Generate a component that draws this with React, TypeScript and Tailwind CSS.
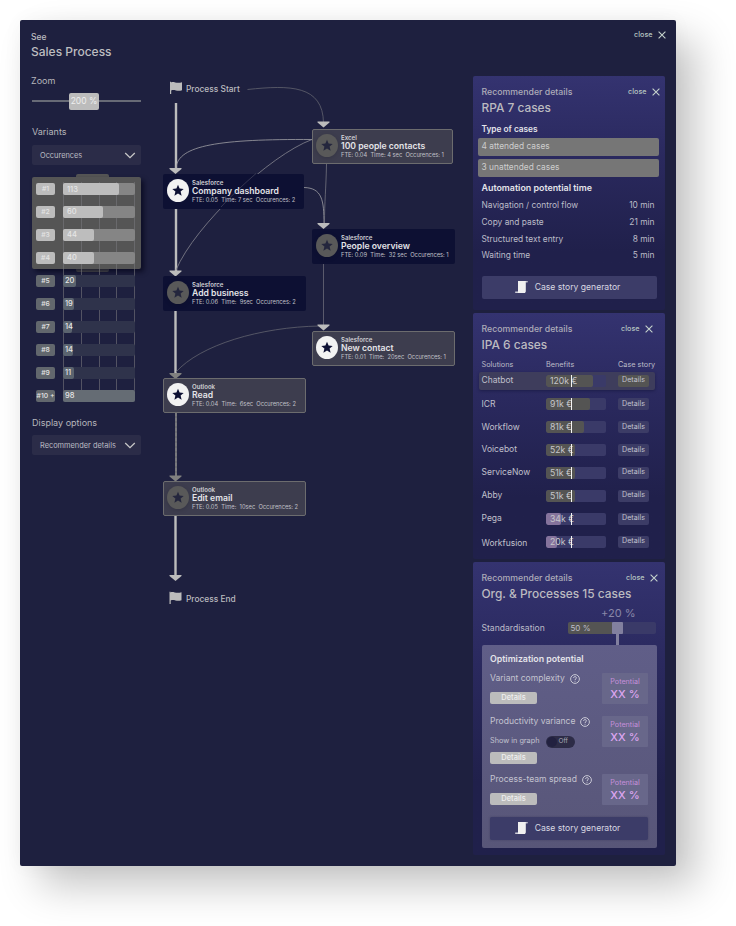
import React from "react";
import { clsx } from "clsx";

type Variant = { label: string; value: number; width: number; tone: "light" | "dark" | "full" };

const variants: Variant[] = [
  { label: "#1", value: 113, width: 56, tone: "light" },
  { label: "#2", value: 60, width: 40, tone: "light" },
  { label: "#3", value: 44, width: 31, tone: "light" },
  { label: "#4", value: 40, width: 31, tone: "light" },
  { label: "#5", value: 20, width: 12.5, tone: "dark" },
  { label: "#6", value: 19, width: 11, tone: "dark" },
  { label: "#7", value: 14, width: 9, tone: "dark" },
  { label: "#8", value: 14, width: 10, tone: "dark" },
  { label: "#9", value: 11, width: 11, tone: "dark" },
  { label: "#10 +", value: 98, width: 72, tone: "full" },
];

type ProcessNode = {
  x: number;
  y: number;
  w: number;
  app: string;
  title: string;
  meta: string;
  outlined?: boolean;
  active?: boolean;
};

const nodes: ProcessNode[] = [
  { x: 163, y: 174, w: 141, app: "Salesforce", title: "Company dashboard", meta: "FTE: 0.05  Time: 7 sec  Occurences: 2", active: true },
  { x: 163, y: 276, w: 143, app: "Salesforce", title: "Add business", meta: "FTE: 0.06  Time:  9sec  Occurences: 2" },
  { x: 163, y: 378, w: 143, app: "Outlook", title: "Read", meta: "FTE: 0.04  Time:  6sec  Occurences: 2", outlined: true, active: true },
  { x: 163, y: 481, w: 143, app: "Outlook", title: "Edit email", meta: "FTE: 0.05  Time:  10sec  Occurences: 2", outlined: true },
  { x: 312, y: 129, w: 141, app: "Excel", title: "100 people contacts", meta: "FTE: 0.04  Time: 4 sec  Occurences: 1", outlined: true },
  { x: 312, y: 229, w: 143, app: "Salesforce", title: "People overview", meta: "FTE: 0.09  Time:  32 sec  Occurences: 1" },
  { x: 312, y: 331, w: 143, app: "Salesforce", title: "New contact", meta: "FTE: 0.01  Time:  20sec  Occurences: 1", outlined: true, active: true },
];

const times = [
  ["Navigation / control flow", "10 min"],
  ["Copy and paste", "21 min"],
  ["Structured text entry", "8 min"],
  ["Waiting time", "5 min"],
];

const solutions = [
  { name: "Chatbot", benefit: "120k €", width: 47 },
  { name: "ICR", benefit: "91k €", width: 44 },
  { name: "Workflow", benefit: "81k €", width: 38 },
  { name: "Voicebot", benefit: "52k €", width: 29 },
  { name: "ServiceNow", benefit: "51k €", width: 29 },
  { name: "Abby", benefit: "51k €", width: 29 },
  { name: "Pega", benefit: "34k €", width: 15, pink: true },
  { name: "Workfusion", benefit: "20k €", width: 11, pink: true },
];

// The canvas shares its coordinate system with the whole page.
const ORIGIN_X = 155;
const ORIGIN_Y = 70;

function Cross() {
  return (
    <svg width="8" height="8" viewBox="0 0 8 8" stroke="#c5d2cc" strokeWidth="1.1">
      <path d="M.6 .6 7.4 7.4M7.4 .6 .6 7.4" />
    </svg>
  );
}

function Close({ className }: { className?: string }) {
  return (
    <div className={clsx("flex items-center gap-[5px] text-[7.2px] leading-[10px] font-medium text-[#b5c4c0]", className)}>
      close
      <Cross />
    </div>
  );
}

function Select({ children }: { children: string }) {
  return (
    <div className="flex h-5 items-center justify-between rounded-[2px] bg-[#2b2c48] pt-px pr-[5px] pl-2 text-[7.4px] text-[#bcbcc4]">
      {children}
      <svg width="12" height="7" viewBox="0 0 12 7" fill="none" stroke="#c8c8c8" strokeWidth="1.3">
        <path d="M1.2 1 6 5.6 10.8 1" />
      </svg>
    </div>
  );
}

function VariantRow({ v }: { v: Variant }) {
  const light = v.tone === "light";
  return (
    <div className="flex h-[22.95px] items-center pl-1">
      <div
        className={clsx(
          "flex h-3 w-[19px] items-center justify-center rounded-[2px] text-[6.8px] font-medium whitespace-nowrap text-[#e4e4e4]",
          light ? "bg-[#bcbcbc]" : "bg-[#62676d]",
        )}
      >
        {v.label}
      </div>
      <div className={clsx("ml-2 h-3 w-[72px] rounded-[2px]", light ? "bg-[#858585]" : "bg-[#2f334b]")}>
        <div
          className={clsx(
            "flex h-full items-center rounded-[2px] text-[7.5px] font-medium text-[#e6e6e6]",
            v.tone === "light" && "bg-[#bdbdbd] pl-[4px]",
            v.tone === "dark" && "bg-[#5b646f] pl-[2px]",
            v.tone === "full" && "bg-[#656c74] pl-[2px]",
          )}
          style={{ width: v.width }}
        >
          {v.value}
        </div>
      </div>
    </div>
  );
}

function Sidebar() {
  return (
    <aside className="w-[110px] pl-[1px] text-[#b6b6bb]">
      <div className="-ml-px text-[9px] leading-[10px]">Zoom</div>
      <div className="mt-[6px] flex h-[18px] items-center">
        <div className="h-[2px] w-[37px] bg-[#676a76]" />
        <div className="flex h-[17px] w-[30px] items-center justify-center rounded-[2px] bg-[#bcbcbc] text-[8.5px] text-[#eeeeee]">
          200 %
        </div>
        <div className="h-[2px] grow bg-[#676a76]" />
      </div>
      <div className="mt-[17px] mb-2 text-[9px] leading-[10px]">Variants</div>
      <Select>Occurences</Select>

      <div className="relative mt-3 pt-[0.7px]">
        <div className="absolute top-[-3px] left-[44px] h-[98px] w-[33px] rounded-[2px] bg-[#555555]" />
        <div className="absolute top-0 left-0 h-[92px] w-[109px] rounded-[2px] bg-[#555555] shadow-[3px_3px_5px_rgba(5,6,25,0.7)]" />
        <div className="absolute top-[5px] left-[31px] flex h-[219px] w-[72px] justify-between">
          {[0, 1, 2, 3, 4].map((i) => (
            <div key={i} className="w-px bg-[#77777c]/60" />
          ))}
        </div>
        <div className="relative">
          {variants.map((v) => (
            <VariantRow key={v.label} v={v} />
          ))}
        </div>
      </div>

      <div className="mt-[11.4px] mb-[7px] text-[9px] leading-[10px] whitespace-nowrap">Display options</div>
      <Select>Recommender details</Select>
    </aside>
  );
}

function Star({ active }: { active?: boolean }) {
  return (
    <svg width="22" height="23" viewBox="0 0 22 23" className={clsx("shrink-0", !active && "drop-shadow-sm")}>
      <ellipse cx="11" cy="11.5" rx="11" ry="11.5" fill={active ? "#f2f2f2" : "#595959"} />
      <path
        d="M11 5.8 12.6 9.6 16.7 9.9 13.6 12.6 14.6 16.7 11 14.5 7.4 16.7 8.4 12.6 5.3 9.9 9.4 9.6Z"
        fill={active ? "#0d1033" : "#24263d"}
      />
    </svg>
  );
}

function NodeCard({ n }: { n: ProcessNode }) {
  return (
    <div
      className={clsx(
        "absolute flex h-[35px] gap-[3px] rounded-[2px] whitespace-nowrap",
        n.outlined ? "border-[1.5px] border-[#6c6c6e] bg-[#3d3d4e] pt-[4px] pl-[3px]" : "bg-[#0d1033] pt-[5px] pl-[4px]",
      )}
      style={{ left: n.x - ORIGIN_X, top: n.y - ORIGIN_Y, width: n.w }}
    >
      <Star active={n.active} />
      <div>
        <div className="text-[6.1px] leading-[7px] font-semibold text-[#d2d2d6]">{n.app}</div>
        <div className="text-[8.65px] leading-[10px] font-semibold text-[#e4e4e8]">{n.title}</div>
        <div className="text-[5.75px] leading-[8px] whitespace-pre text-[#c0c0c8]">{n.meta}</div>
      </div>
    </div>
  );
}

function Flag({ x, y }: { x: number; y: number }) {
  return (
    <path
      transform={`translate(${x} ${y})`}
      d="M0 .2H1V1C3.5-.6 6 2.4 12 .8V8.8C7 10.4 4.5 7.4 1.2 9V12.6H0Z"
      fill="#bcbcbc"
    />
  );
}

function Head({ x, y, dim }: { x: number; y: number; dim?: boolean }) {
  return <path d={`M${x - 6} ${y}H${x + 6}V${y + 1}L${x} ${y + 6}L${x - 6} ${y + 1}Z`} fill={dim ? "#80807f" : "#bcbcbc"} />;
}

function ProcessGraph() {
  return (
    <main className="relative h-[546px] w-[310px]">
      <svg className="absolute inset-0" width="310" height="546" viewBox="155 70 310 546" fill="none">
        <Flag x={170} y={81.5} />
        <Flag x={169.5} y={591.5} />
        <g stroke="#bcbcbc" strokeWidth="2.4">
          <path d="M176 103V169M176 208V272M175.5 310V374M175.5 516V576" />
        </g>
        <path d="M176 413V476" stroke="#6e6e73" strokeWidth="2" />
        <path d="M176 413V476" stroke="#7e7e82" strokeWidth="1.4" strokeDasharray="3 2" />
        <g stroke="#85858f" strokeWidth=".8">
          <path d="M312 139.5C220 139 178 145 176 168" stroke="#a0a0a4" />
          <path d="M312 139.5C270 155 195 225 176 270" />
          <path d="M304 187.5C322 188 324 200 324 224" stroke="#a0a0a4" />
          <path d="M326.5 164C326 190 324.5 200 324.5 224" stroke="#74747f" />
          <path d="M247.5 89.5C290 85 323 85 323.5 123" stroke="#62636f" />
          <path d="M323.5 264V325" stroke="#5a5a6c" strokeWidth="1" />
          <path d="M320 326C260 327 200 345 176 372" stroke="#62636f" />
        </g>
        <Head x={175.5} y={168} />
        <Head x={175.5} y={270.5} />
        <Head x={175.5} y={373} dim />
        <Head x={175.5} y={475.5} dim />
        <Head x={175.5} y={575} />
        <Head x={323.5} y={121.5} />
        <Head x={323.5} y={223} />
        <Head x={323.5} y={324.5} />
      </svg>
      <div className="absolute top-[13px] left-[31px] text-[8.4px] leading-3 font-medium text-[#bcbcbf]">Process Start</div>
      <div className="absolute top-[523px] left-[31px] text-[8.4px] leading-3 font-medium text-[#bcbcbf]">Process End</div>
      {nodes.map((n) => (
        <NodeCard key={n.title} n={n} />
      ))}
      <svg className="absolute inset-0 opacity-40" width="310" height="546" viewBox="155 70 310 546" fill="none">
        <path d="M256 173.5C244 184 232 195 221 207" stroke="#85858f" strokeWidth=".8" />
      </svg>
    </main>
  );
}

type PanelProps = { title: string; closeClass: string; className: string; children: React.ReactNode };

function Panel({ title, closeClass, className, children }: PanelProps) {
  return (
    <section className={clsx("rounded-[2px] bg-linear-to-b from-[#343370] via-[#2a295e] via-35% to-[#20204b] to-75% pr-[8.5px] pl-[8.5px]", className)}>
      <div className="flex items-start justify-between pt-[11px]">
        <div className="text-[8.75px] leading-[11px] font-medium text-[#aeadb9]">Recommender details</div>
        <Close className={closeClass} />
      </div>
      <h2 className="mt-[2px] text-[11.9px] leading-[15px] font-medium text-[#bcbbc0]">{title}</h2>
      {children}
    </section>
  );
}

function StoryButton({ className }: { className?: string }) {
  return (
    <div className={clsx("flex items-center justify-center rounded-[2px] bg-[#3c3c68] text-[8.6px] text-[#d8d8e2]", className)}>
      <svg width="13" height="12" viewBox="0 0 13 12" className="mr-[7px] -ml-[3px]">
        <path d="M3 0H12.5V1.3H10.8V10.5L10 12H.3V10.8H3Z" fill="#f0f0f0" />
        <path d="M.3 11H3M10.8.8H12.6" stroke="#a9a9bd" strokeWidth="1" />
      </svg>
      Case story generator
    </div>
  );
}

function RpaPanel() {
  return (
    <Panel title="RPA 7 cases" closeClass="-mr-[3px]" className="h-[234px]">
      <div className="mt-[9px] text-[8.3px] leading-[11px] font-semibold text-[#e4e4ea]">Type of cases</div>
      <div className="mt-[2.5px] -mr-[2.5px] -ml-[4px] space-y-[2.5px] text-[8.4px] text-[#cdcdcd]">
        <div className="flex h-[18.5px] items-center rounded-[2px] bg-[#767676] pl-[4px]">4 attended cases</div>
        <div className="flex h-[18.5px] items-center rounded-[2px] bg-[#767676] pl-[4px]">3 unattended cases</div>
      </div>
      <div className="mt-[5px] text-[8.9px] leading-[12px] font-semibold text-[#e4e4ea]">Automation potential time</div>
      <div className="mt-[3px] pr-[2px] text-[8.4px] text-[#bcbcc8]">
        {times.map(([k, t]) => (
          <div key={k} className="flex h-[16.8px] items-center justify-between">
            <span>{k}</span>
            <span>{t}</span>
          </div>
        ))}
      </div>
      <StoryButton className="mt-[11.5px] h-[23px]" />
    </Panel>
  );
}

function IpaPanel() {
  return (
    <Panel title="IPA 6 cases" closeClass="mr-[4px]" className="mt-[3px] h-[246px]">
      <div className="mt-[7px] flex h-[12px] items-center text-[7.3px] text-[#bcbcc8]">
        <span className="w-[64.5px]">Solutions</span>
        <span className="w-[72px]">Benefits</span>
        <span className="whitespace-nowrap">Case story</span>
      </div>
      <div>
        {solutions.map((s, i) => (
          <div
            key={s.name}
            className={clsx(
              "-ml-[3px] flex w-[176px] items-center rounded-[2px] pl-[3px]",
              i === 0 ? "mt-[0.5px] mb-[3px] h-[18px] bg-[#3e3d5c] shadow-[0_1px_3px_rgba(10,10,40,0.4)]" : "h-[22.95px]",
            )}
          >
            <span className={clsx("w-[64.5px] text-[8.5px] text-[#c0c0cc]", i === 7 && "pt-[4px]")}>{s.name}</span>
            <div className="relative h-3 w-[60px] overflow-hidden rounded-[2px] bg-[#3a3a68]">
              <div className={clsx("h-full rounded-[2px]", s.pink ? "bg-[#85739c]" : "bg-[#545453]")} style={{ width: s.width }} />
              <span className="absolute top-0 left-1 text-[8.7px] leading-3 text-[#c6c6ca]">{s.benefit}</span>
              <div className="absolute top-0 left-[25px] h-3 w-px bg-[#f4f4f4]" />
            </div>
            <div
              className={clsx(
                "ml-3 flex h-3 w-[31px] items-center justify-center rounded-[2px] text-[7.1px] text-[#c3c3cf]",
                i === 0 ? "bg-[#545453]" : "bg-[#3c3c66]",
              )}
            >
              Details
            </div>
          </div>
        ))}
      </div>
    </Panel>
  );
}

function Help() {
  return (
    <svg width="10" height="10" viewBox="0 0 10 10" fill="none" stroke="#d4d4de" strokeWidth=".9">
      <circle cx="5" cy="5" r="4.4" />
      <path d="M3.6 4C3.6 2.1 6.4 2.1 6.4 3.9C6.4 4.8 5 4.9 5 6M5 6.8V7.7" />
    </svg>
  );
}

function Potential() {
  return (
    <div className="flex h-[31px] w-[46px] flex-col items-center justify-center rounded-[1px] bg-[#68678a] pt-px">
      <div className="text-[7.2px] leading-[10px] text-[#c58fdb]">Potential</div>
      <div className="text-[11px] leading-[14px] font-medium text-[#dda5f0]">XX %</div>
    </div>
  );
}

function Metric({ name, className, children }: { name: string; className: string; children?: React.ReactNode }) {
  return (
    <div className={clsx("flex justify-between", className)}>
      <div>
        <div className="flex h-[12px] items-center gap-[5px] text-[8.55px] text-[#c4c4d0]">
          {name}
          <Help />
        </div>
        {children}
        <div
          className={clsx(
            "flex h-3 w-[47px] items-center justify-center rounded-[2px] bg-[#bcbcbc] text-[7.5px] font-medium text-[#efefef]",
            children ? "mt-[4px]" : "mt-[7px]",
          )}
        >
          Details
        </div>
      </div>
      <Potential />
    </div>
  );
}

function OrgPanel() {
  return (
    <Panel title="Org. & Processes 15 cases" closeClass="-mr-[1px]" className="mt-[3px] h-[293px]">
      <div className="mt-[2px] h-[13px] pt-[4px] pr-[21px] text-right text-[11px] leading-[12px] text-[#8987a8]">+20 %</div>
      <div className="mt-[6px] flex items-center justify-between pr-[1px] text-[8.6px] text-[#bcbcc8]">
        Standardisation
        <div className="relative flex h-3 w-[88px] rounded-[2px] bg-[#3a3a68]">
          <div className="flex w-[44px] items-center rounded-l-[2px] bg-[#545453] pl-[3px] text-[8px]">50 %</div>
          <div className="w-[11px] rounded-[1px] bg-[#82809f]" />
          <div className="absolute top-3 left-[48px] h-[11px] w-[3px] bg-[#82809f]" />
        </div>
      </div>
      <div className="mt-[10px] h-[203px] rounded-[2px] bg-linear-to-b from-[#605e88] to-[#585678] px-[8.5px] pt-[8px]">
        <div className="text-[8.8px] leading-[12px] font-semibold text-[#e4e4ea]">Optimization potential</div>
        <Metric name="Variant complexity" className="mt-[8px] h-[43px]" />
        <Metric name="Productivity variance" className="h-[58px]">
          <div className="mt-[8px] flex h-3 items-center gap-[6px] text-[7.3px] text-[#c4c4d0]">
            Show in graph
            <div className="flex h-3 w-[29px] items-center rounded-full bg-[#2d2c47] pl-px text-[6.5px] text-[#a7a7b3]">
              <div className="mr-[2px] size-[10px] rounded-full bg-[#222140]" />
              Off
            </div>
          </div>
        </Metric>
        <Metric name="Process-team spread" className="h-[43px]" />
        <StoryButton className="h-[23px] shadow-[0_0_2px_rgba(40,40,80,0.5)]" />
      </div>
    </Panel>
  );
}

export default function App() {
  return (
    <div className="h-[926px] w-[736px] overflow-hidden bg-white pt-5 pl-5 font-['Inter',sans-serif]">
      <div className="h-[846px] w-[656px] rounded-[2px] bg-[#1e203f] shadow-[20px_20px_40px_rgba(0,0,0,0.23),0_0_20px_rgba(0,0,0,0.04)]">
        <header className="flex h-14 items-start justify-between pr-[10.5px] pl-[11px] text-[#bdbdc0]">
          <div className="pt-[11px]">
            <div className="text-[8.5px] leading-3 font-medium">See</div>
            <h1 className="mt-[1px] text-[12px] leading-[16px] font-medium">Sales Process</h1>
          </div>
          <Close className="pt-[10px]" />
        </header>
        <div className="flex items-start pl-[11px]">
          <Sidebar />
          <div className="-mt-[6px] ml-[14px]">
            <ProcessGraph />
          </div>
          <div className="ml-2 w-[192px]">
            <RpaPanel />
            <IpaPanel />
            <OrgPanel />
          </div>
        </div>
      </div>
    </div>
  );
}
